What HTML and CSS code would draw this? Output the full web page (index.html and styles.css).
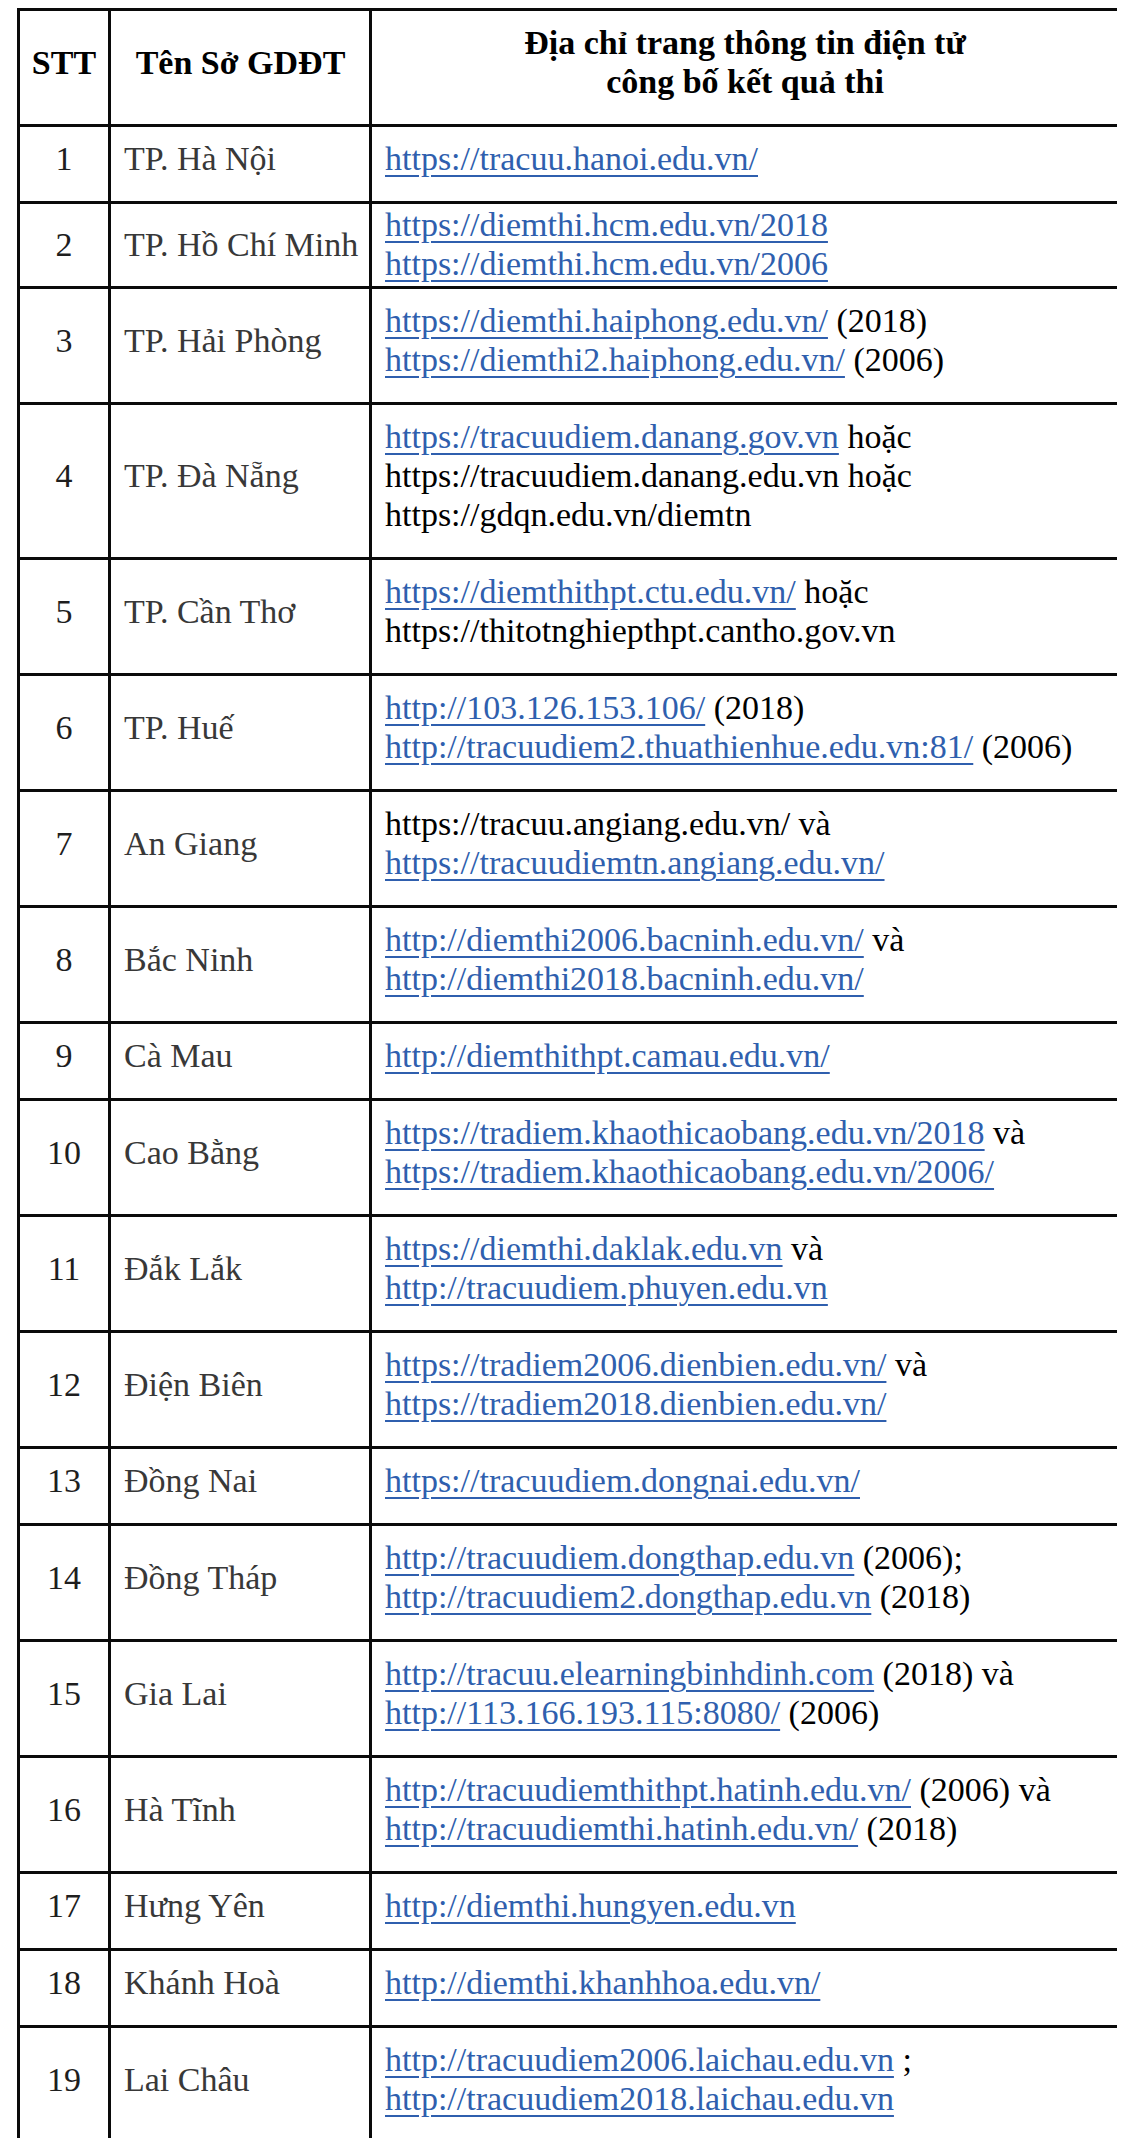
FILE: index.html
```html
<!DOCTYPE html>
<html lang="vi">
<head>
<meta charset="utf-8">
<title>Địa chỉ trang thông tin điện tử công bố kết quả thi</title>
<link rel="stylesheet" href="styles.css">
</head>
<body>
<table class="sheet">
  <colgroup>
    <col class="c-stt">
    <col class="c-name">
    <col class="c-url">
  </colgroup>
  <thead>
    <tr>
      <th class="stt">STT</th>
      <th class="name">Tên Sở GDĐT</th>
      <th class="url">Địa chỉ trang thông tin điện tử<br>công bố kết quả thi</th>
    </tr>
  </thead>
  <tbody>
    <tr>
      <td class="stt">1</td><td class="name">TP. Hà Nội</td>
      <td class="url"><a href="#">https://tracuu.hanoi.edu.vn/</a></td>
    </tr>
    <tr class="tight">
      <td class="stt">2</td><td class="name">TP. Hồ Chí Minh</td>
      <td class="url"><a href="#">https://diemthi.hcm.edu.vn/2018</a><br><a href="#">https://diemthi.hcm.edu.vn/2006</a></td>
    </tr>
    <tr>
      <td class="stt">3</td><td class="name">TP. Hải Phòng</td>
      <td class="url"><a href="#">https://diemthi.haiphong.edu.vn/</a> (2018)<br><a href="#">https://diemthi2.haiphong.edu.vn/</a> (2006)</td>
    </tr>
    <tr>
      <td class="stt">4</td><td class="name">TP. Đà Nẵng</td>
      <td class="url"><a href="#">https://tracuudiem.danang.gov.vn</a> hoặc<br>https://tracuudiem.danang.edu.vn hoặc<br>https://gdqn.edu.vn/diemtn</td>
    </tr>
    <tr>
      <td class="stt">5</td><td class="name">TP. Cần Thơ</td>
      <td class="url"><a href="#">https://diemthithpt.ctu.edu.vn/</a> hoặc<br>https://thitotnghiepthpt.cantho.gov.vn</td>
    </tr>
    <tr>
      <td class="stt">6</td><td class="name">TP. Huế</td>
      <td class="url"><a href="#">http://103.126.153.106/</a> (2018)<br><a href="#">http://tracuudiem2.thuathienhue.edu.vn:81/</a> (2006)</td>
    </tr>
    <tr>
      <td class="stt">7</td><td class="name">An Giang</td>
      <td class="url">https://tracuu.angiang.edu.vn/ và<br><a href="#">https://tracuudiemtn.angiang.edu.vn/</a></td>
    </tr>
    <tr>
      <td class="stt">8</td><td class="name">Bắc Ninh</td>
      <td class="url"><a href="#">http://diemthi2006.bacninh.edu.vn/</a> và<br><a href="#">http://diemthi2018.bacninh.edu.vn/</a></td>
    </tr>
    <tr>
      <td class="stt">9</td><td class="name">Cà Mau</td>
      <td class="url"><a href="#">http://diemthithpt.camau.edu.vn/</a></td>
    </tr>
    <tr>
      <td class="stt">10</td><td class="name">Cao Bằng</td>
      <td class="url"><a href="#">https://tradiem.khaothicaobang.edu.vn/2018</a> và<br><a href="#">https://tradiem.khaothicaobang.edu.vn/2006/</a></td>
    </tr>
    <tr>
      <td class="stt">11</td><td class="name">Đắk Lắk</td>
      <td class="url"><a href="#">https://diemthi.daklak.edu.vn</a> và<br><a href="#">http://tracuudiem.phuyen.edu.vn</a></td>
    </tr>
    <tr>
      <td class="stt">12</td><td class="name">Điện Biên</td>
      <td class="url"><a href="#">https://tradiem2006.dienbien.edu.vn/</a> và<br><a href="#">https://tradiem2018.dienbien.edu.vn/</a></td>
    </tr>
    <tr>
      <td class="stt">13</td><td class="name">Đồng Nai</td>
      <td class="url"><a href="#">https://tracuudiem.dongnai.edu.vn/</a></td>
    </tr>
    <tr>
      <td class="stt">14</td><td class="name">Đồng Tháp</td>
      <td class="url"><a href="#">http://tracuudiem.dongthap.edu.vn</a> (2006);<br><a href="#">http://tracuudiem2.dongthap.edu.vn</a> (2018)</td>
    </tr>
    <tr>
      <td class="stt">15</td><td class="name">Gia Lai</td>
      <td class="url"><a href="#">http://tracuu.elearningbinhdinh.com</a> (2018) và<br><a href="#">http://113.166.193.115:8080/</a> (2006)</td>
    </tr>
    <tr>
      <td class="stt">16</td><td class="name">Hà Tĩnh</td>
      <td class="url"><a href="#">http://tracuudiemthithpt.hatinh.edu.vn/</a> (2006) và<br><a href="#">http://tracuudiemthi.hatinh.edu.vn/</a> (2018)</td>
    </tr>
    <tr>
      <td class="stt">17</td><td class="name">Hưng Yên</td>
      <td class="url"><a href="#">http://diemthi.hungyen.edu.vn</a></td>
    </tr>
    <tr>
      <td class="stt">18</td><td class="name">Khánh Hoà</td>
      <td class="url"><a href="#">http://diemthi.khanhhoa.edu.vn/</a></td>
    </tr>
    <tr>
      <td class="stt">19</td><td class="name">Lai Châu</td>
      <td class="url"><a href="#">http://tracuudiem2006.laichau.edu.vn</a> ;<br><a href="#">http://tracuudiem2018.laichau.edu.vn</a></td>
    </tr>
  </tbody>
</table>
</body>
</html>
```

FILE: styles.css
```css
html, body {
  background: #ffffff;
}

body {
  margin: 8px 7px 0 17px;
  font-family: "Liberation Serif", "Times New Roman", serif;
  font-size: 34px;
  line-height: 39px;
  color: #000000;
}

.sheet {
  width: 1100px;
  border-collapse: collapse;
  table-layout: fixed;
}

.c-stt { width: 91px; }
.c-name { width: 261px; }
.c-url { width: 748px; }

.sheet th,
.sheet td {
  border: 3px solid #0a0a0a;
  padding: 12px 12px 23px 13px;
  vertical-align: middle;
  white-space: nowrap;
}

.sheet th {
  font-weight: bold;
  text-align: center;
}

.sheet th.stt,
.sheet td.stt {
  text-align: center;
  padding-left: 4px;
  padding-right: 4px;
}

.sheet td.stt {
  color: #1e1e1e;
}

.sheet td.name {
  color: #383838;
  text-align: left;
}

.sheet td.url {
  color: #000000;
  text-align: left;
}

.sheet tr.tight td {
  padding-top: 1px;
  padding-bottom: 3px;
}

.sheet a {
  color: #2f5fae;
  text-decoration: underline;
  text-decoration-thickness: 2px;
  text-underline-offset: 5px;
}
```
